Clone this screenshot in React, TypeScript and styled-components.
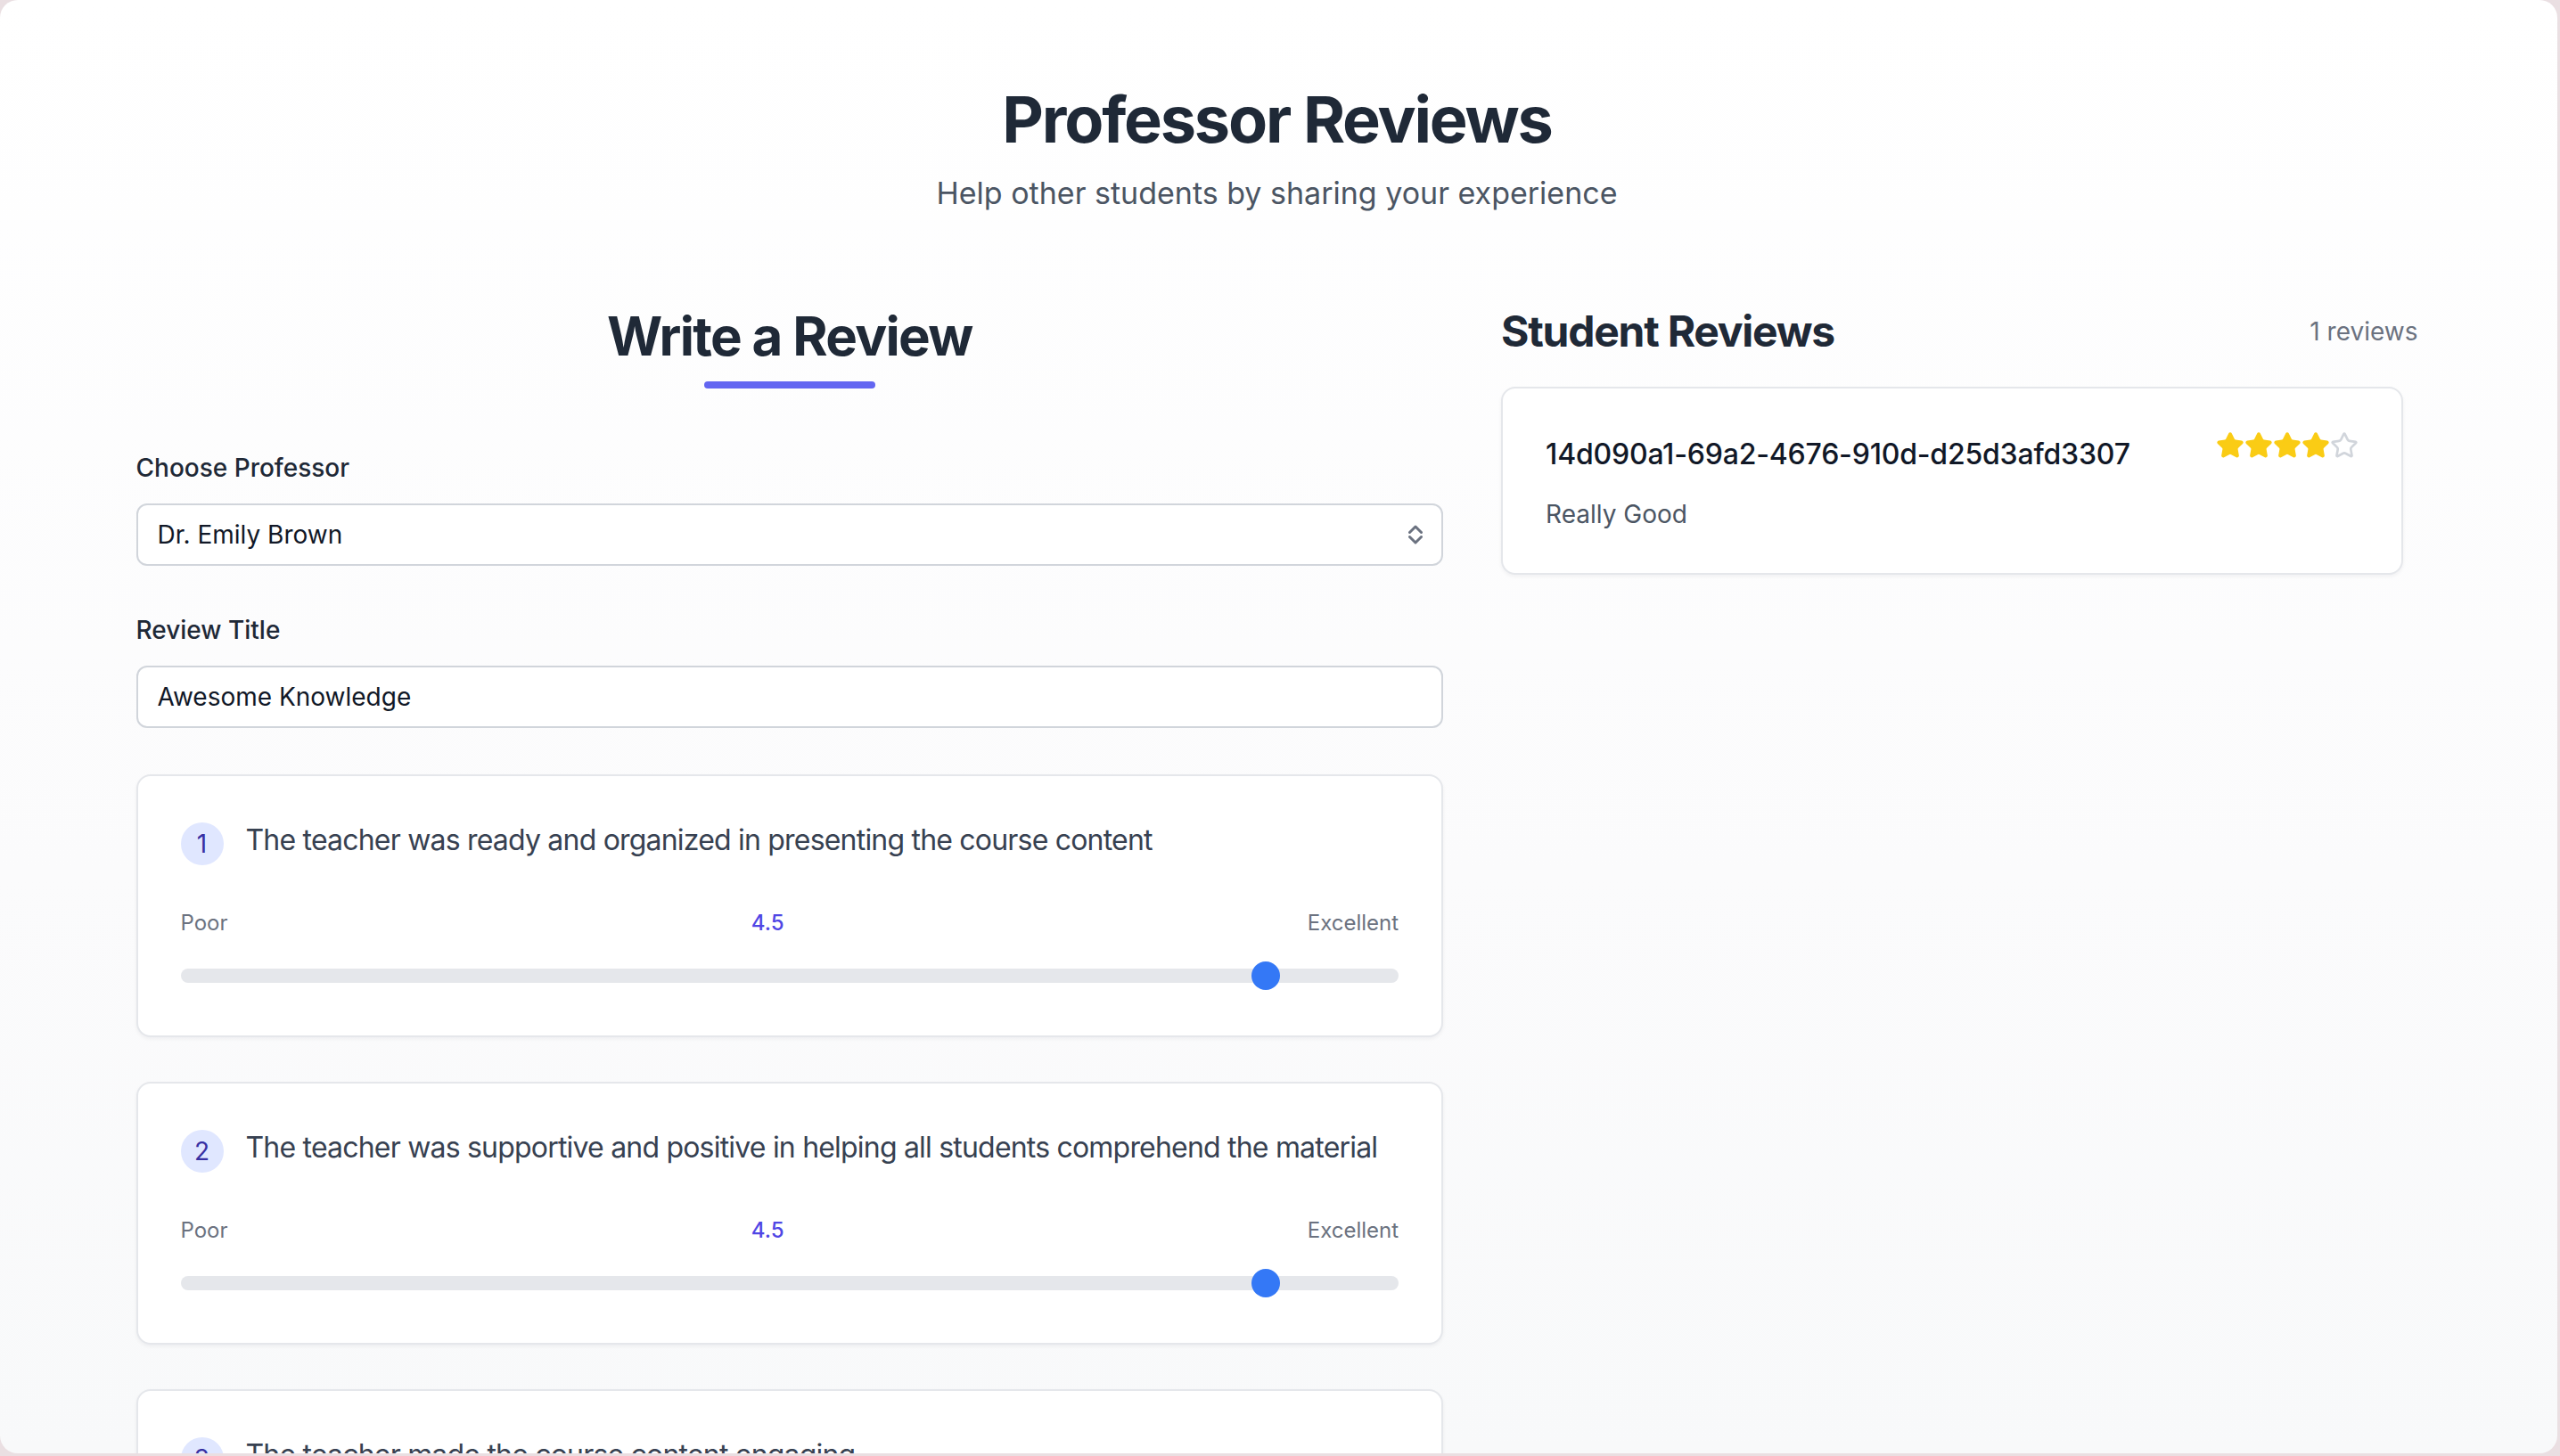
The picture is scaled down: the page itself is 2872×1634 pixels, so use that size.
import React from 'react';
import styled, { createGlobalStyle } from 'styled-components';

const GlobalStyle = createGlobalStyle`
  html, body {
    margin: 0;
    padding: 0;
    background: #eadfe2;
  }
  body {
    font-family: Inter, "Noto Sans", "Liberation Sans", sans-serif;
    -webkit-font-smoothing: antialiased;
  }
  * { box-sizing: border-box; }
`;

// window frame of the screenshot: rounded with a faint pink edge right/bottom
const Shell = styled.div`
  width: calc(100vw - 3px);
  height: calc(100vh - 3px);
  padding-right: 4px;
  border-radius: 20px;
  overflow: hidden;
  background: linear-gradient(to bottom, #ffffff 0%, #fbfbfc 60%, #f8f9fa 100%);
`;

const Page = styled.div`
  max-width: 2560px;
  margin: 0 auto;
  padding-top: 94px;
`;

const Header = styled.header`
  text-align: center;
`;

const Title = styled.h1`
  margin: 0;
  font-size: 72px;
  line-height: 80px;
  font-weight: 700;
  color: #1f2937;
  letter-spacing: -2.2px;
`;

const Subtitle = styled.p`
  margin: 19px 0 0;
  font-size: 34px;
  line-height: 48px;
  color: #4b5563;
`;

const Columns = styled.div`
  margin-top: 100px;
  display: grid;
  grid-template-columns: 1466fr 1028fr;
  column-gap: 65px;
  align-items: start;
`;

const FormColumn = styled.section``;

const FormHeader = styled.div`
  text-align: center;
  margin-bottom: 69px;
`;

const SectionTitle = styled.h2<{ $size: number; $track: number }>`
  margin: 0;
  font-size: ${p => p.$size}px;
  line-height: ${p => Math.round(p.$size * 1.2)}px;
  font-weight: 700;
  color: #1f2937;
  letter-spacing: ${p => p.$track}px;
`;

const Underline = styled.div`
  width: 192px;
  height: 8px;
  margin: 15px auto 0;
  border-radius: 999px;
  background: #6366f1;
`;

const Field = styled.div`
  margin-bottom: 52px;
`;

const Label = styled.label`
  display: block;
  margin-bottom: 20px;
  font-size: 28px;
  line-height: 40px;
  font-weight: 500;
  color: #1f2937;
`;

const SelectWrap = styled.div`
  position: relative;
`;

const controlCss = `
  display: block;
  width: 100%;
  height: 70px;
  padding: 0 22px;
  border: 2px solid #d1d5db;
  border-radius: 12px;
  background: #ffffff;
  font-family: inherit;
  font-size: 28px;
  color: #111827;
  outline: none;
`;

const Select = styled.select`
  ${controlCss}
  appearance: none;
  -webkit-appearance: none;
`;

const Input = styled.input`
  ${controlCss}
`;

const SelectIcon = styled.svg`
  position: absolute;
  right: 23px;
  top: 23px;
  pointer-events: none;
`;

const QuestionList = styled.div`
  display: flex;
  flex-direction: column;
  gap: 50px;
`;

const Card = styled.div`
  background: #ffffff;
  border: 2px solid #e5e7eb;
  border-radius: 16px;
  box-shadow: 0 2px 4px rgba(17, 24, 39, 0.05);
`;

const QuestionCard = styled(Card)`
  padding: 48px 48px 51px;
`;

const QuestionRow = styled.div`
  display: flex;
  align-items: flex-start;
  margin-bottom: 49px;
`;

const Badge = styled.span`
  flex: none;
  width: 48px;
  height: 48px;
  margin-top: 4px;
  margin-right: 25px;
  border-radius: 50%;
  background: #e0e7ff;
  color: #3730a3;
  font-size: 28px;
  display: flex;
  align-items: center;
  justify-content: center;
`;

const QuestionText = styled.p`
  margin: 0;
  font-size: 32px;
  line-height: 48px;
  color: #374151;
  letter-spacing: -0.8px;
  white-space: nowrap;
`;

const ScaleRow = styled.div`
  display: flex;
  justify-content: space-between;
  margin-bottom: 27px;
  font-size: 24px;
  line-height: 32px;
  color: #6b7280;
`;

const ScaleValue = styled.span`
  color: #4f46e5;
  font-weight: 500;
`;

const SliderWrap = styled.div`
  height: 32px;
  display: flex;
  align-items: center;
`;

const Range = styled.input`
  -webkit-appearance: none;
  appearance: none;
  width: 100%;
  height: 16px;
  margin: 0;
  border-radius: 999px;
  background: #e5e7eb;
  outline: none;

  &::-webkit-slider-thumb {
    -webkit-appearance: none;
    appearance: none;
    width: 32px;
    height: 32px;
    border-radius: 50%;
    background: #3478f6;
    border: none;
  }
`;

const ReviewsColumn = styled.section``;

const ReviewsHeader = styled.div`
  display: flex;
  justify-content: space-between;
  align-items: center;
  margin: 2px 0 33px;
`;

const Count = styled.span`
  font-size: 28px;
  line-height: 40px;
  color: #6b7280;
`;

const ReviewList = styled.div`
  padding-right: 17px;
`;

const ReviewCard = styled(Card)`
  padding: 50px 48px 46px;
`;

const ReviewTop = styled.div`
  display: flex;
  justify-content: space-between;
  align-items: flex-start;
`;

const ReviewTitle = styled.h3`
  margin: 0;
  font-size: 32px;
  line-height: 48px;
  font-weight: 500;
  color: #111827;
  letter-spacing: -0.2px;
`;

const Stars = styled.div`
  display: flex;
  margin-top: -2px;
`;

const Comment = styled.p`
  margin: 23px 0 0;
  font-size: 28px;
  line-height: 40px;
  color: #4b5563;
`;

const STAR =
  'M11.525 2.295a.53.53 0 0 1 .95 0l2.31 4.679a2.123 2.123 0 0 0 1.595 1.16l5.166.756a.53.53 0 0 1 .294.904l-3.736 3.638a2.123 2.123 0 0 0-.611 1.878l.882 5.14a.53.53 0 0 1-.771.56l-4.618-2.428a2.122 2.122 0 0 0-1.973 0L6.396 21.01a.53.53 0 0 1-.77-.56l.881-5.139a2.122 2.122 0 0 0-.611-1.879L2.16 9.795a.53.53 0 0 1 .294-.906l5.165-.755a2.122 2.122 0 0 0 1.597-1.16z';

const Star = ({ filled }: { filled: boolean }) => (
  <svg width="32" height="32" viewBox="0 0 24 24">
    <path
      d={STAR}
      fill={filled ? '#facc15' : 'none'}
      stroke={filled ? '#facc15' : '#d1d5db'}
      strokeWidth="2"
      strokeLinejoin="round"
    />
  </svg>
);

const questions = [
  'The teacher was ready and organized in presenting the course content',
  'The teacher was supportive and positive in helping all students comprehend the material',
  'The teacher made the course content engaging',
];

const reviews = [
  { id: '14d090a1-69a2-4676-910d-d25d3afd3307', rating: 4, comment: 'Really Good' },
];

export default function App() {
  return (
    <>
      <GlobalStyle />
      <Shell>
        <Page>
          <Header>
            <Title>Professor Reviews</Title>
            <Subtitle>Help other students by sharing your experience</Subtitle>
          </Header>

          <Columns>
            <FormColumn>
              <FormHeader>
                <SectionTitle $size={60} $track={-1.7}>Write a Review</SectionTitle>
                <Underline />
              </FormHeader>

              <Field>
                <Label>Choose Professor</Label>
                <SelectWrap>
                  <Select defaultValue="emily">
                    <option value="emily">Dr. Emily Brown</option>
                    <option value="john">Dr. John Smith</option>
                  </Select>
                  <SelectIcon width="16" height="24" viewBox="0 0 16 24" fill="none">
                    <path d="M1.5 9.5 L8 3 L14.5 9.5" stroke="#6b7280" strokeWidth="3" strokeLinecap="round" strokeLinejoin="round" />
                    <path d="M1.5 14.5 L8 21 L14.5 14.5" stroke="#6b7280" strokeWidth="3" strokeLinecap="round" strokeLinejoin="round" />
                  </SelectIcon>
                </SelectWrap>
              </Field>

              <Field>
                <Label>Review Title</Label>
                <Input defaultValue="Awesome Knowledge" />
              </Field>

              <QuestionList>
                {questions.map((q, i) => (
                  <QuestionCard key={i}>
                    <QuestionRow>
                      <Badge>{i + 1}</Badge>
                      <QuestionText>{q}</QuestionText>
                    </QuestionRow>
                    <ScaleRow>
                      <span>Poor</span>
                      <ScaleValue>4.5</ScaleValue>
                      <span>Excellent</span>
                    </ScaleRow>
                    <SliderWrap>
                      <Range type="range" min={0} max={5} step={0.5} defaultValue={4.5} />
                    </SliderWrap>
                  </QuestionCard>
                ))}
              </QuestionList>
            </FormColumn>

            <ReviewsColumn>
              <ReviewsHeader>
                <SectionTitle $size={48} $track={-1.25}>Student Reviews</SectionTitle>
                <Count>{reviews.length} reviews</Count>
              </ReviewsHeader>
              <ReviewList>
                {reviews.map(r => (
                  <ReviewCard key={r.id}>
                    <ReviewTop>
                      <ReviewTitle>{r.id}</ReviewTitle>
                      <Stars>
                        {[1, 2, 3, 4, 5].map(n => (
                          <Star key={n} filled={n <= r.rating} />
                        ))}
                      </Stars>
                    </ReviewTop>
                    <Comment>{r.comment}</Comment>
                  </ReviewCard>
                ))}
              </ReviewList>
            </ReviewsColumn>
          </Columns>
        </Page>
      </Shell>
    </>
  );
}
